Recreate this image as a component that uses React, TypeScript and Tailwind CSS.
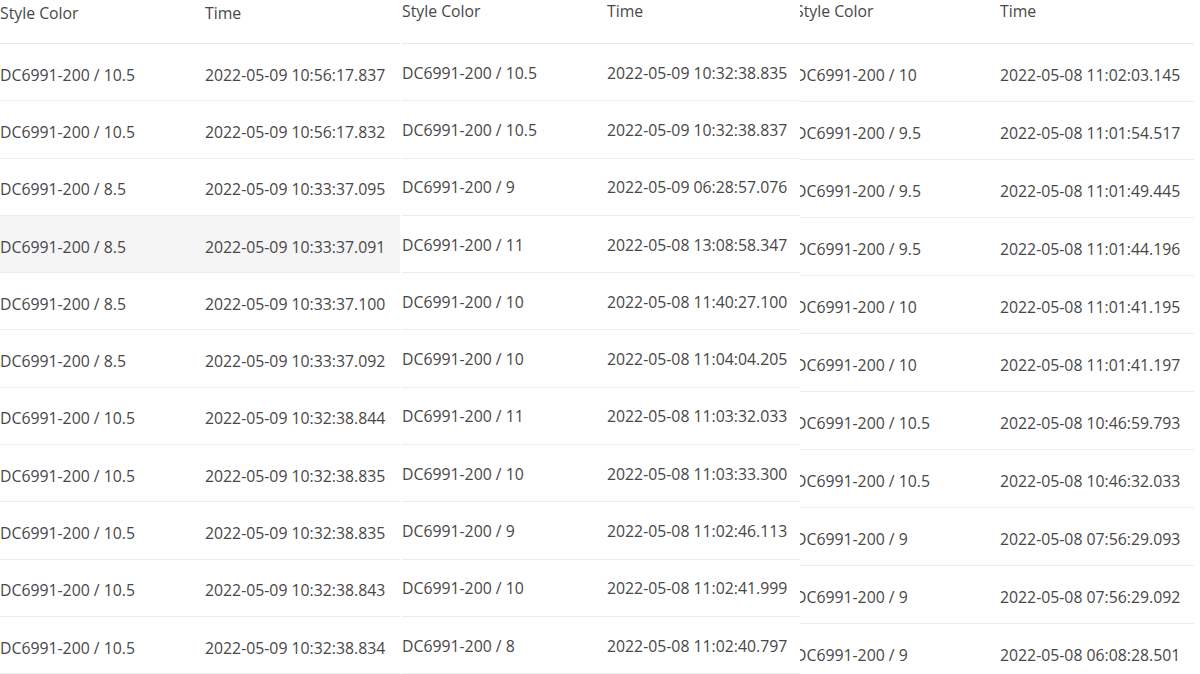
import React from "react";

type Row = [string, string];

const p1: Row[] = [
  ["DC6991-200 / 10.5", "2022-05-09 10:56:17.837"],
  ["DC6991-200 / 10.5", "2022-05-09 10:56:17.832"],
  ["DC6991-200 / 8.5", "2022-05-09 10:33:37.095"],
  ["DC6991-200 / 8.5", "2022-05-09 10:33:37.091"],
  ["DC6991-200 / 8.5", "2022-05-09 10:33:37.100"],
  ["DC6991-200 / 8.5", "2022-05-09 10:33:37.092"],
  ["DC6991-200 / 10.5", "2022-05-09 10:32:38.844"],
  ["DC6991-200 / 10.5", "2022-05-09 10:32:38.835"],
  ["DC6991-200 / 10.5", "2022-05-09 10:32:38.835"],
  ["DC6991-200 / 10.5", "2022-05-09 10:32:38.843"],
  ["DC6991-200 / 10.5", "2022-05-09 10:32:38.834"],
];
const p2: Row[] = [
  ["DC6991-200 / 10.5", "2022-05-09 10:32:38.835"],
  ["DC6991-200 / 10.5", "2022-05-09 10:32:38.837"],
  ["DC6991-200 / 9", "2022-05-09 06:28:57.076"],
  ["DC6991-200 / 11", "2022-05-08 13:08:58.347"],
  ["DC6991-200 / 10", "2022-05-08 11:40:27.100"],
  ["DC6991-200 / 10", "2022-05-08 11:04:04.205"],
  ["DC6991-200 / 11", "2022-05-08 11:03:32.033"],
  ["DC6991-200 / 10", "2022-05-08 11:03:33.300"],
  ["DC6991-200 / 9", "2022-05-08 11:02:46.113"],
  ["DC6991-200 / 10", "2022-05-08 11:02:41.999"],
  ["DC6991-200 / 8", "2022-05-08 11:02:40.797"],
];
const p3: Row[] = [
  ["DC6991-200 / 10", "2022-05-08 11:02:03.145"],
  ["DC6991-200 / 9.5", "2022-05-08 11:01:54.517"],
  ["DC6991-200 / 9.5", "2022-05-08 11:01:49.445"],
  ["DC6991-200 / 9.5", "2022-05-08 11:01:44.196"],
  ["DC6991-200 / 10", "2022-05-08 11:01:41.195"],
  ["DC6991-200 / 10", "2022-05-08 11:01:41.197"],
  ["DC6991-200 / 10.5", "2022-05-08 10:46:59.793"],
  ["DC6991-200 / 10.5", "2022-05-08 10:46:32.033"],
  ["DC6991-200 / 9", "2022-05-08 07:56:29.093"],
  ["DC6991-200 / 9", "2022-05-08 07:56:29.092"],
  ["DC6991-200 / 9", "2022-05-08 06:08:28.501"],
];

function Panel({
  rows,
  offset,
  rowH,
  headPad,
  rowPad,
  hover,
  lineEnd,
}: {
  rows: Row[];
  offset: string;
  rowH: string;
  headPad: string;
  rowPad: string;
  hover?: number;
  lineEnd?: string;
}) {
  return (
    <div className="w-[400px] shrink-0 overflow-hidden">
      <div className={`flex flex-col ${offset}`}>
        <div className={`flex items-start h-[44px] border-b border-[#e9e9e9] ${headPad} ${lineEnd ?? ""}`}>
          <div className="w-[205px] shrink-0">Style Color</div>
          <div>Time</div>
        </div>
        {rows.map((r, i) => (
          <div
            key={i}
            className={`flex items-center ${rowPad} ${rowH} border-b border-[#ededed] ${lineEnd ?? ""} ${
              hover === i ? "bg-[#f5f5f5]" : ""
            }`}
          >
            <div className="w-[205px] shrink-0 whitespace-nowrap">{r[0]}</div>
            <div className="whitespace-nowrap">{r[1]}</div>
          </div>
        ))}
      </div>
    </div>
  );
}

export default function App() {
  return (
    <div
      className="w-[1200px] h-[674px] overflow-hidden bg-white flex text-[15.8px] text-[#474747] leading-[22px]"
      style={{ fontFamily: '"Open Sans", "Noto Sans", sans-serif' }}
    >
      <Panel rows={p1} offset="" headPad="pt-[2px]" rowPad="pt-[5px]" rowH="h-[57.3px]" hover={3} />
      <Panel rows={p2} offset="pl-[2px]" headPad="pt-0" rowPad="pt-[1px]" rowH="h-[57.3px]" />
      <Panel rows={p3} offset="-ml-[5px]" headPad="pt-0" rowPad="pt-[5px]" rowH="h-[58px]" lineEnd="mr-[6px]" />
    </div>
  );
}
